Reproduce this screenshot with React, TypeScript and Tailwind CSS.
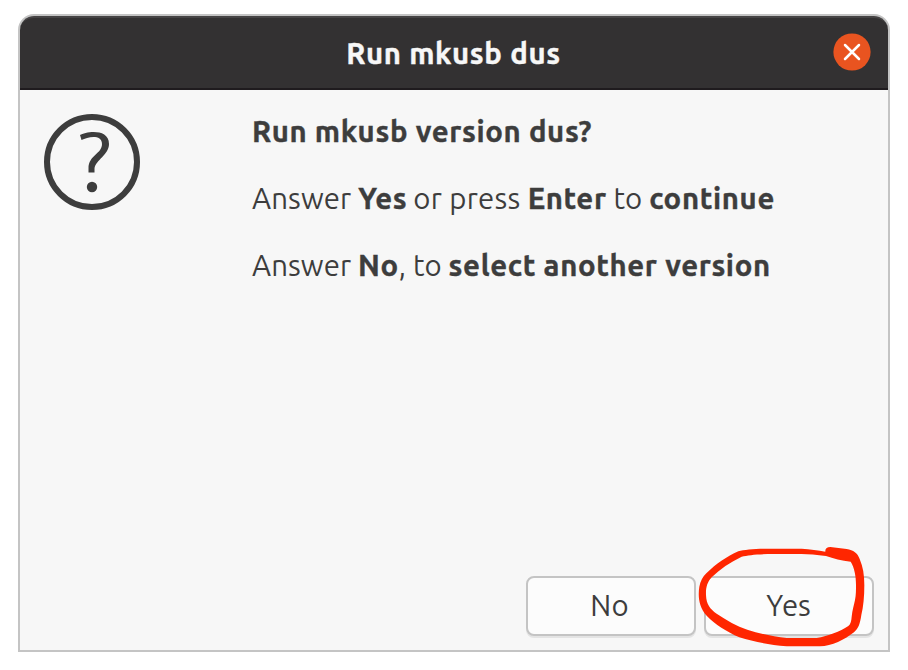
import React from "react";

const font = "font-['Ubuntu','Noto_Sans',sans-serif]";

function Titlebar() {
  return (
    <header className="relative flex h-[74px] shrink-0 items-center justify-center rounded-t-[14px] border-t-2 border-b-2 border-t-[#454344] border-b-[#1f1b1e] bg-[#333132] pt-0.5 pr-px">
      <h1 className="text-[29.33px] leading-10 font-bold tracking-[0.67px] text-[#f7f7f7] [-webkit-text-stroke:0.4px]">Run mkusb dus</h1>
      <button aria-label="Close" className="absolute top-[15px] right-[17px] size-[38px]">
        <svg width="38" height="38" viewBox="0 0 38 38" fill="none" stroke="#fff" strokeWidth="2.5" strokeLinecap="round">
          <circle cx="19" cy="19" r="18.600" fill="#e95420" stroke="none" />
          <path d="M12 12L26 26M26 12L12 26" />
        </svg>
      </button>
    </header>
  );
}

function Strong({ children }: { children: React.ReactNode }) {
  return <b className="tracking-[0.64px] [-webkit-text-stroke:0.4px]">{children}</b>;
}

function QuestionIcon() {
  return (
    <svg className="mt-[24px] ml-[24px] size-24 shrink-0" viewBox="0 0 96 96" fill="none">
      <circle cx="48" cy="48" r="45" stroke="#3d3d3d" strokeWidth="6" />
      <path d="M36 21C42 17.500 65 14 65 30C65 41 51.500 46 50.500 54.500V58.500H44.500V54.500C44.500 41 58 40 58 30C58 20 44 22.500 37.500 26Z" fill="#3d3d3d" />
      <circle cx="48" cy="73" r="5.200" fill="#3d3d3d" />
    </svg>
  );
}

export default function App() {
  return (
    <div className={`${font} relative h-[670px] w-[908px] bg-white pt-[14px] pl-[18px] text-[#3d3d3d]`}>
      <main className="flex h-[638px] w-[872px] flex-col rounded-t-[16px] border-2 border-[#c4c4c4] bg-[#f7f7f7]">
        <Titlebar />
        <section className="flex flex-1">
          <QuestionIcon />
          <div className="mt-[22px] ml-[112px] flex flex-col gap-[27px] text-[29.33px] leading-10 whitespace-nowrap">
            <p><Strong>Run mkusb version dus?</Strong></p>
            <p className="tracking-[0.12px]">Answer <Strong>Yes</Strong><span className="-ml-px tracking-[0.3px]"> or press </span><Strong>Enter</Strong> to <Strong>continue</Strong></p>
            <p className="tracking-[0.1px]">Answer <Strong>No</Strong>, to <Strong>select another version</Strong></p>
          </div>
        </section>
        <footer className="flex justify-end gap-2 pr-[14px] pb-[14px] text-[29.33px]">
          <button className="h-[60px] w-[170px] rounded-[8px] border-2 border-[#c4c4c4] bg-[#fcfcfc] pr-[3px] pb-px tracking-[0.3px] shadow-[0_2px_0_#e4e4e4]">No</button>
          <button className="h-[60px] w-[170px] rounded-[8px] border-2 border-[#c4c4c4] bg-[#fcfcfc] pr-px pb-px shadow-[0_2px_0_#e4e4e4]">Yes</button>
        </footer>
      </main>
      <svg className="pointer-events-none absolute top-[535px] left-[690px]" width="218" height="135" viewBox="0 0 654 405" fill="#ff2600">
        <path fillRule="evenodd" d="M406 50C405 40 411 36 421 36L470 42C490 45 503 54 509 72C519 95 523 120 523 150C523 185 520 215 514 240C510 268 505 280 492 292C465 313 425 334 390 334H290C235 329 190 320 148 307C110 290 75 268 50 242C25 215 24 180 28 155C31 138 38 126 49 115C80 85 110 65 145 49C165 43 205 41 250 41H335C360 42 385 46 406 50ZM408 63C380 59 355 58 335 57H250C205 57 175 60 155 65C120 82 90 102 65 127C51 142 47 160 48 180C49 208 60 222 80 236C110 256 140 273 172 284C210 296 250 305 290 309H380C415 303 450 290 475 273C482 267 484 258 485 245C487 225 492 210 495 195C498 180 498 165 498 150C498 122 493 98 482 80C455 77 430 71 408 63Z" />
      </svg>
    </div>
  );
}
